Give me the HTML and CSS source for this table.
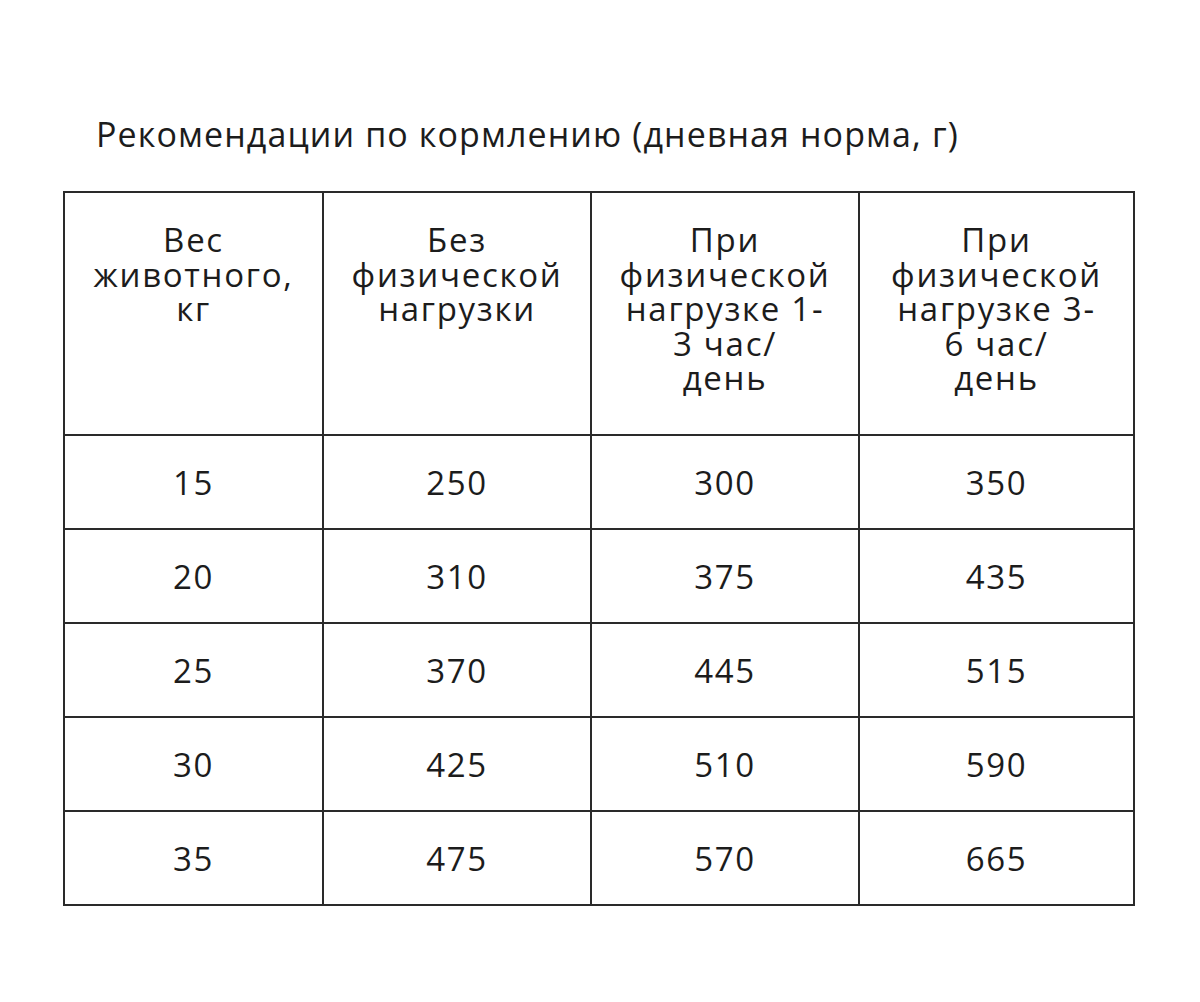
FILE: index.html
```html
<!DOCTYPE html>
<html lang="ru">
<head>
<meta charset="utf-8">
<link rel="stylesheet" href="styles.css">
</head>
<body>
<div class="page">
  <h2 class="title">Рекомендации по кормлению (дневная норма, г)</h2>
  <table class="feed">
    <colgroup>
      <col class="c1"><col class="c2"><col class="c3"><col class="c4">
    </colgroup>
    <thead>
      <tr>
        <th>Вес<br>животного,<br>кг</th>
        <th>Без<br>физической<br>нагрузки</th>
        <th>При<br>физической<br>нагрузке 1-<br>3 час/<br>день</th>
        <th>При<br>физической<br>нагрузке 3-<br>6 час/<br>день</th>
      </tr>
    </thead>
    <tbody>
      <tr><td>15</td><td>250</td><td>300</td><td>350</td></tr>
      <tr><td>20</td><td>310</td><td>375</td><td>435</td></tr>
      <tr><td>25</td><td>370</td><td>445</td><td>515</td></tr>
      <tr><td>30</td><td>425</td><td>510</td><td>590</td></tr>
      <tr><td>35</td><td>475</td><td>570</td><td>665</td></tr>
    </tbody>
  </table>
</div>
</body>
</html>
```

FILE: styles.css
```css
html, body {
  margin: 0;
  padding: 0;
  background: #ffffff;
}
.page {
  padding: 112px 0 0 63px;
  font-family: "Open Sans", "Noto Sans", sans-serif;
  color: #1c1c1c;
}
.title {
  margin: 0 0 35px 33px;
  font-size: 34px;
  font-weight: 400;
  line-height: 44px;
  letter-spacing: 1.1px;
  white-space: nowrap;
}
.feed {
  border-collapse: collapse;
  width: 1070px;
  table-layout: fixed;
  font-size: 33px;
  letter-spacing: 1.7px;
}
.c1 { width: 259px; }
.c2 { width: 268px; }
.c3 { width: 268px; }
.c4 { width: 275px; }
.feed th, .feed td {
  border: 2px solid #2a2a2a;
  text-align: center;
  font-weight: 400;
}
.feed th {
  vertical-align: top;
  height: 243px;
  box-sizing: border-box;
  padding: 30px 0 10px;
  line-height: 34.5px;
  white-space: nowrap;
}
.feed td {
  height: 94px;
  box-sizing: border-box;
  padding: 0;
  vertical-align: middle;
  line-height: 35px;
}
```
